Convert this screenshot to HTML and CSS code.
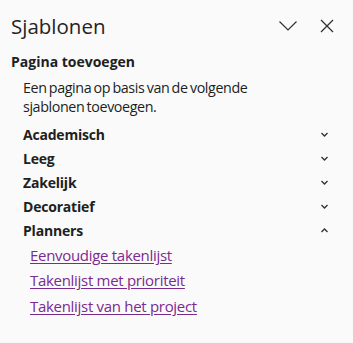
FILE: index.html
```html
<!DOCTYPE html>
<html>
<head>
<meta charset="utf-8">
<link rel="stylesheet" href="styles.css">
</head>
<body>
<div class="pane">
  <div class="header">
    <h1 class="title">Sjablonen</h1>
    <button class="hbtn" aria-label="Opties">
      <svg width="18" height="10" viewBox="0 0 18 10"><path d="M0.5 0.5 L9 9 L17.5 0.5" fill="none" stroke="#323130" stroke-width="1.2"/></svg>
    </button>
    <button class="hbtn close" aria-label="Sluiten">
      <svg width="14" height="14" viewBox="0 0 14 14"><path d="M1 1 L13 13 M13 1 L1 13" fill="none" stroke="#323130" stroke-width="1.3"/></svg>
    </button>
  </div>
  <h2 class="section">Pagina toevoegen</h2>
  <p class="desc">Een pagina op basis van de volgende sjablonen toevoegen.</p>
  <ul class="cats">
    <li class="cat"><span>Academisch</span><svg class="chev" width="7" height="5" viewBox="0 0 7 5"><path d="M0.5 1 L3.5 4 L6.5 1" fill="none" stroke="#323130" stroke-width="1.3"/></svg></li>
    <li class="cat"><span>Leeg</span><svg class="chev" width="7" height="5" viewBox="0 0 7 5"><path d="M0.5 1 L3.5 4 L6.5 1" fill="none" stroke="#323130" stroke-width="1.3"/></svg></li>
    <li class="cat"><span>Zakelijk</span><svg class="chev" width="7" height="5" viewBox="0 0 7 5"><path d="M0.5 1 L3.5 4 L6.5 1" fill="none" stroke="#323130" stroke-width="1.3"/></svg></li>
    <li class="cat"><span>Decoratief</span><svg class="chev" width="7" height="5" viewBox="0 0 7 5"><path d="M0.5 1 L3.5 4 L6.5 1" fill="none" stroke="#323130" stroke-width="1.3"/></svg></li>
    <li class="cat"><span>Planners</span><svg class="chev" width="7" height="5" viewBox="0 0 7 5"><path d="M0.5 4 L3.5 1 L6.5 4" fill="none" stroke="#323130" stroke-width="1.3"/></svg></li>
  </ul>
  <ul class="links">
    <li><a href="#">Eenvoudige takenlijst</a></li>
    <li><a href="#">Takenlijst met prioriteit</a></li>
    <li><a href="#">Takenlijst van het project</a></li>
  </ul>
</div>
</body>
</html>
```
FILE: styles.css
```css
html, body {
  margin: 0;
  padding: 0;
  background: #fafafa;
}
body {
  font-family: "Open Sans", "Noto Sans", sans-serif;
  color: #201f1e;
  width: 353px;
  height: 343px;
  overflow: hidden;
}
.pane {
  padding: 0 0 0 11px;
}
.header {
  display: flex;
  align-items: center;
  height: 52px;
}
.title {
  margin: 0;
  font-size: 20.5px;
  font-weight: 400;
  flex: 1;
  color: #252423;
}
.hbtn {
  background: none;
  border: 0;
  padding: 0;
  display: flex;
  align-items: center;
  justify-content: center;
  width: 30px;
  height: 30px;
  margin-right: 9px;
}
.hbtn.close {
  margin-right: 11px;
}
.section {
  margin: 0 0 7px;
  font-size: 14px;
  font-weight: 700;
}
.desc {
  margin: 0 0 0 12px;
  font-size: 14.3px;
  line-height: 19px;
  width: 262px;
  letter-spacing: -0.4px;
  word-spacing: -1px;
}
.cats {
  list-style: none;
  margin: 6px 0 0 12px;
  padding: 0;
}
.cat {
  display: flex;
  align-items: center;
  justify-content: space-between;
  height: 24px;
  font-size: 14px;
  font-weight: 700;
  letter-spacing: -0.2px;
  padding-right: 25px;
}
.links {
  list-style: none;
  margin: 0 0 0 19px;
  padding: 0;
}
.links li {
  height: 25.5px;
  display: flex;
  align-items: center;
}
.links a {
  color: #7b2a8f;
  font-size: 15px;
  letter-spacing: -0.3px;
  text-decoration: underline;
  text-underline-offset: 2px;
}
```
